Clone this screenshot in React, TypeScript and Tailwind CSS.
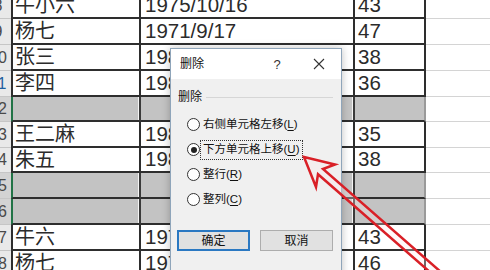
type Row = {
  n: number;
  name?: string;
  date?: string;
  age?: string;
  gray?: boolean;
  short?: boolean;
};

const rows: Row[] = [
  { n: 8, name: "牛小六", date: "1975/10/16", age: "43" },
  { n: 9, name: "杨七", date: "1971/9/17", age: "47" },
  { n: 10, name: "张三", date: "1986/5/21", age: "38" },
  { n: 11, name: "李四", date: "1988/2/14", age: "36" },
  { n: 12, gray: true, short: true },
  { n: 13, name: "王二麻", date: "1989/7/3", age: "35" },
  { n: 14, name: "朱五", date: "1986/11/8", age: "38", short: true },
  { n: 15, gray: true },
  { n: 16, gray: true },
  { n: 17, name: "牛六", date: "1975/8/9", age: "43" },
  { n: 18, name: "杨七", date: "1978/4/25", age: "46" },
];

const Sheet = () => {
  return (
    <div className="flex flex-col mt-[-7px] font-['Liberation_Sans','Noto_Sans_CJK_SC',sans-serif] text-[#2b2b2b]">
      {rows.map((r) => (
        <div key={r.n} className={`flex ${r.short ? "h-[25px]" : "h-[26px]"}`}>
          {/* row header, mostly cut off on the left */}
          <div
            className={`ml-[-15px] w-[26px] shrink-0 flex items-center justify-center border-b border-[#c6c6c6] text-[16px] leading-none ${
              r.gray ? "bg-[#d3d3d3]" : "bg-[#e9e9e9]"
            } ${r.n === 11 ? "text-[#1f5f9f]" : "text-[#4a4a4a]"}`}
          >
            {r.n}
          </div>
          <div
            className={`w-[130px] shrink-0 flex items-center pl-[2px] border-l-2 border-r-2 border-b-2 border-b-[#2e2e2e] text-[20px] leading-none ${
              r.gray
                ? "bg-[#c3c3c3] border-l-[#217346] border-r-[#3a3a3a] shadow-[inset_-1px_0_0_#f4f4f4]"
                : "border-l-[#2e2e2e] border-r-[#2e2e2e]"
            }`}
          >
            {r.name}
          </div>
          <div
            className={`w-[214px] shrink-0 flex items-center pl-[4px] border-r-2 border-b-2 border-b-[#2e2e2e] text-[20.5px] leading-none ${
              r.gray
                ? "bg-[#c3c3c3] border-r-[#3a3a3a] shadow-[inset_-1px_0_0_#f4f4f4]"
                : "border-r-[#2e2e2e]"
            }`}
          >
            {r.date}
          </div>
          <div
            className={`w-[71px] shrink-0 flex items-center pl-[3px] border-r-2 border-b-2 border-b-[#2e2e2e] text-[20.5px] leading-none ${
              r.gray ? "bg-[#c3c3c3] border-r-[#9a9a9a]" : "border-r-[#2e2e2e]"
            }`}
          >
            {r.age}
          </div>
          <div className="flex-1 border-b border-[#d4d4d4]" />
        </div>
      ))}
    </div>
  );
};

const Radio = ({ label, hotkey, checked }: { label: string; hotkey: string; checked?: boolean }) => (
  <div className="h-[25px] flex items-center pl-[16px]">
    <div className="w-[13px] h-[13px] rounded-full border border-[#333] bg-white flex items-center justify-center shrink-0">
      {checked && <div className="w-[6px] h-[6px] rounded-full bg-[#222]" />}
    </div>
    <div
      className={`h-[20px] flex items-center px-[2px] border leading-none ${
        checked ? "border-dotted border-[#333]" : "border-transparent"
      }`}
    >
      {label}(<span className="underline underline-offset-2">{hotkey}</span>)
    </div>
  </div>
);

const DeleteDialog = () => {
  return (
    <div className="absolute left-[170px] top-[48px] w-[172px] h-[240px] border border-[#8fa5ba] bg-[#f0f0f0] shadow-[0_0_8px_rgba(0,0,0,0.25)] font-['Liberation_Sans','Noto_Sans_CJK_SC',sans-serif] text-[11.5px] text-[#111]">
      {/* title bar */}
      <div className="h-[30px] bg-white flex items-center pl-[9px] pr-[7px] leading-none">
        <span className="text-[12px]">删除</span>
        <div className="ml-auto flex items-center gap-[12px]">
          <span className="w-[30px] text-center text-[13px] text-[#333]">?</span>
          <span className="w-[30px] flex justify-center">
            <svg width="12" height="12" viewBox="0 0 12 12">
              <path d="M1 1 L11 11 M11 1 L1 11" stroke="#333" strokeWidth="1.1" />
            </svg>
          </span>
        </div>
      </div>

      {/* body */}
      <div className="pt-[10px]">
        <div className="h-[16px] flex items-center pl-[7px] pr-[8px] leading-none">
          <span className="text-[12px]">删除</span>
          <div className="ml-[4px] flex-1 border-t border-[#d6d6d6]" />
        </div>
        <div className="mt-[7px] flex flex-col">
          <Radio label="右侧单元格左移" hotkey="L" />
          <Radio label="下方单元格上移" hotkey="U" checked />
          <Radio label="整行" hotkey="R" />
          <Radio label="整列" hotkey="C" />
        </div>
        <div className="mt-[18px] flex gap-[10px] px-[6px]">
          <button className="w-[73px] h-[21px] bg-[#e1e1e1] border-2 border-[#2a78c2] text-[12px] leading-none flex items-center justify-center">
            确定
          </button>
          <button className="w-[73px] h-[21px] bg-[#e1e1e1] border border-[#adadad] text-[12px] leading-none flex items-center justify-center">
            取消
          </button>
        </div>
      </div>
    </div>
  );
};

const Arrow = () => (
  <svg className="absolute inset-0 pointer-events-none" width="490" height="270" viewBox="0 0 490 270">
    <polygon
      points="304,157 335,164.5 323,169 449.5,279.5 444.5,284.8 318,174.3 316,187"
      fill="rgba(255,235,235,0.3)"
      stroke="#d92027"
      strokeWidth="2.5"
      strokeLinejoin="miter"
    />
  </svg>
);

export default function App() {
  return (
    <div className="relative w-[490px] h-[270px] overflow-hidden bg-white">
      <Sheet />
      <DeleteDialog />
      <Arrow />
    </div>
  );
}
